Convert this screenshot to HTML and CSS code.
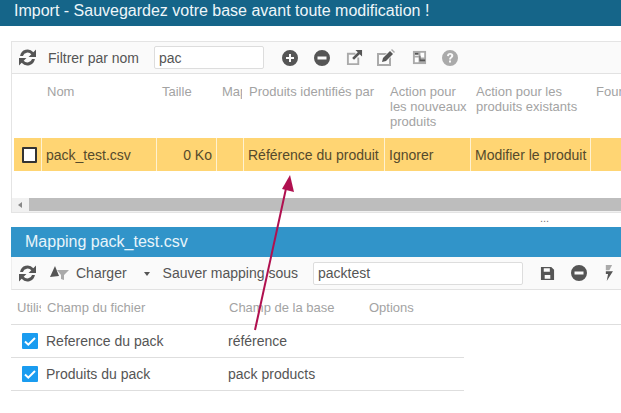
FILE: index.html
```html
<!DOCTYPE html>
<html lang="fr">
<head>
  <meta charset="utf-8">
  <title>Import</title>
  <link rel="stylesheet" href="styles.css">
</head>
<body>

  <header class="top-bar">Import - Sauvegardez votre base avant toute modification !</header>

  <section class="panel files">
    <div class="toolbar">
      <svg class="icon refresh" viewBox="2 2 16 16"><path d="M3 8.500A7.200 7.200 0 0 1 15.500 5L18 2.500V9.500H11L13.600 7A4.600 4.600 0 0 0 5.700 8.500ZM17 11.500A7.200 7.200 0 0 1 4.500 15L2 17.500V10.500H9L6.400 13A4.600 4.600 0 0 0 14.300 11.500Z"/></svg>
      <span class="tool-label filter-label">Filtrer par nom</span>
      <input class="field filter-field" type="text" value="pac">
      <svg class="icon plus" viewBox="0 0 16 16"><path fill-rule="evenodd" d="M8 0a8 8 0 1 0 0 16A8 8 0 0 0 8 0ZM7 4h2v3h3v2H9v3H7V9H4V7h3Z"/></svg>
      <svg class="icon minus" viewBox="0 0 16 16"><path fill-rule="evenodd" d="M8 0a8 8 0 1 0 0 16A8 8 0 0 0 8 0ZM3.500 6.500h9v3h-9Z"/></svg>
      <svg class="icon link" viewBox="0 0 18 18"><path class="soft" d="M1 4h9v2H3v9h9V9h2v8H1Z"/><path d="M10 1h7v7l-2.500-2.500L8.500 11.500 6.500 9.500l6-6Z"/></svg>
      <svg class="icon pen" viewBox="0 0 18 18"><path class="soft" d="M0 4h10L8 6H2v9h10v-5l2-2v9H0Z"/><path d="M5 13l1-4 7-7 3 3-7 7Z"/><path class="soft" d="M14 1l1-1 3 3-1 1Z"/></svg>
      <svg class="icon split" viewBox="0 0 16 16"><path class="soft" d="M1 1h14v14H1Z"/><path fill="#fff" d="M3 3h4v3H3ZM3 8h4v5H3ZM9 3h4v5H9Z"/><path d="M8 6h1v4h5v2H8ZM3 3h4v2H3Z"/></svg>
      <svg class="icon help" viewBox="0 0 16 16"><path fill-rule="evenodd" class="soft-dark" d="M8 0a8 8 0 1 0 0 16A8 8 0 0 0 8 0ZM5 6c0-2 1.400-3 3.200-3S11.300 4 11.300 5.700c0 2-2.300 2.300-2.300 3.800H7.100C7.100 7.300 9.200 7 9.200 5.800 9.200 5.100 8.800 4.800 8.100 4.800S7 5.300 7 6.200ZM7 10.500h2v2H7Z"/></svg>
    </div>

    <div class="grid-head file-cols">
      <span></span>
      <span>Nom</span>
      <span>Taille</span>
      <span class="clip">Mapping</span>
      <span class="clip">Produits identifiés par</span>
      <span>Action pour les nouveaux produits</span>
      <span>Action pour les produits existants</span>
      <span class="clip">Fournisseur</span>
    </div>

    <div class="file-row file-cols">
      <span class="cell"><i class="check"></i></span>
      <span class="cell">pack_test.csv</span>
      <span class="cell right">0 Ko</span>
      <span class="cell"></span>
      <span class="cell">Référence du produit</span>
      <span class="cell">Ignorer</span>
      <span class="cell">Modifier le produit</span>
      <span class="cell"></span>
    </div>

    <div class="h-scroll">
      <span class="scroll-left"></span>
      <span class="scroll-thumb"></span>
    </div>
  </section>

  <div class="splitter">...</div>

  <section class="panel mapping">
    <div class="panel-title">Mapping pack_test.csv</div>
    <div class="toolbar map-toolbar">
      <svg class="icon refresh" viewBox="2 2 16 16"><path d="M3 8.500A7.200 7.200 0 0 1 15.500 5L18 2.500V9.500H11L13.600 7A4.600 4.600 0 0 0 5.700 8.500ZM17 11.500A7.200 7.200 0 0 1 4.500 15L2 17.500V10.500H9L6.400 13A4.600 4.600 0 0 0 14.300 11.500Z"/></svg>
      <svg class="icon load" viewBox="0 0 20 14"><path d="M6 0l4 10-9 1Z"/><path class="soft" d="M8 4h12l-5 5v5l-3-1V9Z"/></svg>
      <span class="tool-label charger">Charger</span>
      <span class="caret"></span>
      <span class="tool-label">Sauver mapping sous</span>
      <input class="field map-field" type="text" value="packtest">
      <svg class="icon save" viewBox="0 0 16 16"><path fill-rule="evenodd" d="M1 1h11l3 3v11H1ZM4 2.500V6h6.500V2.500ZM5 9.500v4h6v-4Z"/></svg>
      <svg class="icon minus" viewBox="0 0 16 16"><path fill-rule="evenodd" d="M8 0a8 8 0 1 0 0 16A8 8 0 0 0 8 0ZM3.500 6.500h9v3h-9Z"/></svg>
      <svg class="icon bolt" viewBox="0 0 12 18"><path class="soft" d="M3 0h7L7 6H3Z"/><path d="M3 7h8L4 18l1.500-8H3Z"/></svg>
    </div>

    <div class="map-head">
      <span class="clip">Utiliser</span>
      <span>Champ du fichier</span>
      <span>Champ de la base</span>
      <span>Options</span>
    </div>

    <div class="map-row">
      <span><i class="check on"><svg viewBox="0 0 16 16"><path d="M3 8.500l3.300 3.200L13 5"/></svg></i></span>
      <span>Reference du pack</span>
      <span>référence</span>
    </div>
    <div class="map-row">
      <span><i class="check on"><svg viewBox="0 0 16 16"><path d="M3 8.500l3.300 3.200L13 5"/></svg></i></span>
      <span>Produits du pack</span>
      <span>pack products</span>
    </div>
  </section>

  <svg class="arrow" viewBox="0 0 621 413">
    <path d="M255 330L287 184"/>
    <polygon points="290,175 294,192 282,189"/>
  </svg>

</body>
</html>
```

FILE: styles.css
```css
html, body {
  margin: 0;
  padding: 0;
}

body {
  position: relative;
  width: 621px;
  height: 413px;
  overflow: hidden;
  background-color: #fff;
  font-family: 'Liberation Sans', Arial, sans-serif;
  font-size: 14px;
  color: #555;
}

.top-bar {
  height: 26px;
  line-height: 21px;
  padding-left: 14px;
  background-color: #156589;
  color: #eef6fa;
  font-size: 16px;
  box-sizing: border-box;
}

.panel {
  margin-left: 11px;
  width: 610px;
  overflow: hidden;
}

.files {
  margin-top: 15px;
  border: 1px solid #e4e4e4;
  border-right: none;
  box-sizing: border-box;
  height: 172px;
}

.toolbar {
  display: flex;
  align-items: center;
  height: 32px;
  background-color: #fafafa;
  border-bottom: 1px solid #e2e2e2;
  padding-left: 7px;
}

.files .toolbar {
  height: 31px;
}

.icon {
  display: block;
  flex: none;
  fill: #555;
}

.icon .soft,
.icon .soft-dark {
  fill: #aaa;
}

.refresh {
  width: 17px;
  height: 17px;
}

.plus, .minus {
  width: 16px;
  height: 16px;
}

.plus {
  margin-left: 18px;
}

.files .minus {
  margin-left: 16px;
}

.link {
  width: 17px;
  height: 17px;
  margin-left: 16px;
}

.pen {
  width: 18px;
  height: 18px;
  margin-left: 14px;
}

.split {
  width: 15px;
  height: 15px;
  margin-left: 17px;
}

.help {
  width: 16px;
  height: 16px;
  margin-left: 15px;
}

.tool-label {
  white-space: nowrap;
  color: #555;
}

.filter-label {
  margin-left: 12px;
}

.field {
  height: 23px;
  box-sizing: border-box;
  border: 1px solid #ddd;
  border-radius: 2px;
  background-color: #fff;
  padding: 0 4px;
  font: 14px 'Liberation Sans', Arial, sans-serif;
  color: #555;
}

.filter-field {
  width: 110px;
  margin-left: 15px;
}

.grid-head {
  height: 64px;
  padding-top: 10px;
  box-sizing: border-box;
  font-size: 13px;
  line-height: 15px;
  color: #a3a3a3;
  margin-left: 2px;
}

.file-cols {
  display: grid;
  grid-template-columns: 28px 115px 60px 27px 141px 86px 120px 100px;
}

.grid-head span {
  padding-left: 5px;
}

.grid-head .clip {
  margin-right: 2px;
}

.clip {
  overflow: hidden;
  white-space: nowrap;
}

.file-row {
  height: 33px;
  margin-left: 2px;
  background-color: #ffd573;
  color: #554a2c;
}

.cell {
  display: flex;
  align-items: center;
  padding: 0 4px;
  border-right: 1px solid #fff2d0;
  white-space: nowrap;
}

.right {
  justify-content: flex-end;
}

.check {
  display: block;
  width: 16px;
  height: 16px;
  margin-left: 4px;
  box-sizing: border-box;
  border: 2px solid #333;
  background-color: #fff;
  border-radius: 1px;
}

.check.on {
  border: none;
  background-color: #1a9cf0;
}

.check svg {
  display: block;
  fill: none;
  stroke: #fff;
  stroke-width: 2;
}

.h-scroll {
  display: flex;
  height: 14px;
  margin-top: 27px;
  background-color: #f1f1f1;
}

.scroll-left {
  width: 17px;
  position: relative;
}

.scroll-left::before {
  content: "";
  position: absolute;
  left: 6px;
  top: 4px;
  border: 3px solid transparent;
  border-left: none;
  border-right: 4px solid #888;
}

.scroll-thumb {
  flex: 1;
  height: 13px;
  background-color: #bdbdbd;
}

.splitter {
  height: 14px;
  line-height: 10px;
  padding-left: 540px;
  font-size: 11px;
  color: #777;
}

.panel-title {
  height: 30px;
  line-height: 29px;
  padding-left: 14px;
  background-color: #3194c9;
  color: #e8f4fb;
  font-size: 16px;
}

.map-toolbar {
  padding-left: 7px;
  border-left: 1px solid #eee;
}

.load {
  width: 20px;
  height: 14px;
  margin-left: 13px;
}

.charger {
  margin-left: 7px;
}

.caret {
  width: 0;
  height: 0;
  margin: 1px 13px 0 17px;
  border: 3px solid transparent;
  border-bottom: none;
  border-top: 4px solid #555;
}

.map-field {
  width: 210px;
  margin-left: 15px;
}

.save {
  width: 15px;
  height: 15px;
  margin-left: 17px;
}

.map-toolbar .minus {
  margin-left: 16px;
}

.bolt {
  width: 11px;
  height: 16px;
  margin-left: 16px;
}

.map-head {
  display: grid;
  grid-template-columns: 30px 182px 140px 100px;
  height: 35px;
  align-items: center;
  padding-left: 6px;
  border-bottom: 1px solid #dedede;
  font-size: 13px;
  color: #a3a3a3;
  box-sizing: border-box;
}

.map-head .clip {
  margin-right: 6px;
}

.map-row {
  display: grid;
  grid-template-columns: 35px 182px 236px;
  width: 453px;
  height: 33px;
  align-items: center;
  border-bottom: 1px solid #dedede;
  box-sizing: border-box;
  color: #555;
}

.map-row .check {
  margin-left: 11px;
}

.arrow {
  position: absolute;
  left: 0;
  top: 0;
  width: 621px;
  height: 413px;
  pointer-events: none;
}

.arrow path {
  fill: none;
  stroke: #b0104f;
  stroke-width: 2;
}

.arrow polygon {
  fill: #b0104f;
}
```
